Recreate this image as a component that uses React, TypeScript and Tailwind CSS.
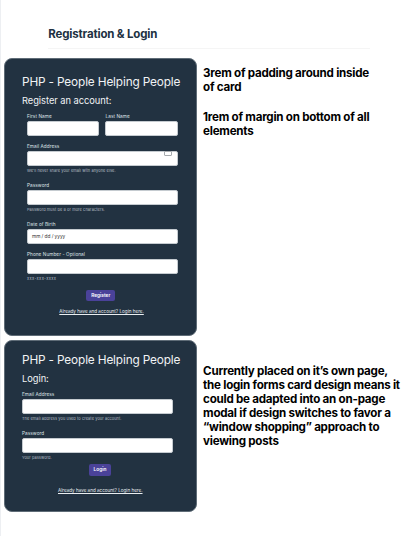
import type { ReactNode } from "react";

function Label({ children }: { children: ReactNode }) {
  return (
    <label className="block h-[11px] text-[4.7px] leading-[12px] tracking-[0.07px] text-[#dfe4e8]">{children}</label>
  );
}

function Box({ children }: { children?: ReactNode }) {
  return (
    <div className="relative flex h-[14.5px] items-center rounded-[2px] border-[0.5px] border-[#c5cbd0] bg-white pl-[4px] text-[4.8px] tracking-[-0.05px] text-[#333]">
      {children}
    </div>
  );
}

function Hint({ children }: { children: ReactNode }) {
  return <p className="h-[9px] text-[3.95px] leading-[9px] tracking-[0.06px] whitespace-nowrap text-[#b4bdc5]">{children}</p>;
}

function Action({ children }: { children: ReactNode }) {
  return (
    <button className="block rounded-[2px] bg-[#4a4299] text-center text-[4.8px] leading-[11.5px] font-semibold text-white">
      {children}
    </button>
  );
}

function LoginLink() {
  return (
    <a className="text-[4.6px] leading-[8px] whitespace-nowrap text-[#e9edf0] underline underline-offset-[1px]">
      Already have and account? Login here.
    </a>
  );
}

function Title() {
  return (
    <h2 className="h-[16px] text-[11.8px] leading-[16px] tracking-[-0.14px] whitespace-nowrap text-[#f1f3f5]">
      PHP - People Helping People
    </h2>
  );
}

const card = "w-[192.5px] rounded-[8px] border-[0.5px] border-[#5f6c77] bg-[#223241] pl-[16.6px]";
const subtitle = "mt-[5px] h-[12px] text-[9.3px] leading-[12px] tracking-[-0.03px] text-[#f1f3f5]";
const note = "text-[11.6px] leading-[14px] font-bold tracking-[-0.24px] whitespace-nowrap text-black";

export default function App() {
  return (
    <main className="h-[536px] w-[416px] overflow-hidden border-l border-[#edeff2] bg-white font-[Inter,sans-serif]">
      <header className="ml-[47.3px] h-[49px] w-[322px] border-b border-[#f5f5f5] pt-[25.6px]">
        <h1 className="text-[11.5px] leading-[16px] font-bold tracking-[-0.17px] whitespace-nowrap text-[#213142]">
          Registration &amp; Login
        </h1>
      </header>

      <section className="flex pt-[9px] pl-[3.4px]">
        <div className={`${card} h-[277.5px] pt-[15px]`}>
          <Title />
          <h3 className={subtitle}>Register an account:</h3>
          <form className="ml-[5px] w-[151px] pt-[3px]">
            <div className="flex gap-[6px]">
              <div className="flex-1">
                <Label>First Name</Label>
                <Box />
              </div>
              <div className="flex-1">
                <Label>Last Name</Label>
                <Box />
              </div>
            </div>
            <div className="mt-[4.5px]">
              <Label>Email Address</Label>
              <Box>
                <span className="absolute top-[-1.5px] right-[5px] h-[5px] w-[8px] rounded-[1px] border border-[#a6aaae]" />
              </Box>
              <Hint>We'll never share your email with anyone else.</Hint>
            </div>
            <div className="mt-[4.5px]">
              <Label>Password</Label>
              <Box />
              <Hint>Password must be 8 or more characters.</Hint>
            </div>
            <div className="mt-[4.5px]">
              <Label>Date of Birth</Label>
              <Box>mm / dd / yyyy</Box>
            </div>
            <div className="mt-[4.5px]">
              <Label>Phone Number - Optional</Label>
              <Box />
              <div className="tracking-[0.3px]">
                <p className="h-[9px] text-[4.1px] leading-[9px] text-[#b4bdc5]">xxx-xxx-xxxx</p>
              </div>
            </div>
            <div className="mt-[7px] ml-[59.5px] grid w-[28.5px]">
              <Action>Register</Action>
            </div>
            <div className="mt-[7px] ml-[32.3px] flex">
              <LoginLink />
            </div>
          </form>
        </div>
        <div className="pt-[8px] pl-[6.2px]">
          <p className={note}>3rem of padding around inside<br />of card</p>
          <p className={`${note} mt-[16px]`}>1rem of margin on bottom of all<br />elements</p>
        </div>
      </section>

      <section className="flex pt-[4.5px] pl-[3.4px]">
        <div className={`${card} h-[171.5px] pt-[11px]`}>
          <Title />
          <h3 className={subtitle}>Login:</h3>
          <form className="w-[151px] pt-[3px]">
            <Label>Email Address</Label>
            <Box />
            <Hint>The email address you used to create your account.</Hint>
            <div className="mt-[4.5px]">
              <Label>Password</Label>
              <Box />
              <Hint>Your password.</Hint>
            </div>
            <div className="mt-[2.5px] ml-[67px] grid w-[22px]">
              <Action>Login</Action>
            </div>
            <div className="mt-[11px] ml-[36px] flex">
              <LoginLink />
            </div>
          </form>
        </div>
        <p className={`${note} pt-[24px] pl-[6.2px]`}>
          Currently placed on it’s own page,<br />
          the login forms card design means it<br />
          could be adapted into an on-page<br />
          modal if design switches to favor a<br />
          “window shopping” approach to<br />
          viewing posts
        </p>
      </section>
    </main>
  );
}
